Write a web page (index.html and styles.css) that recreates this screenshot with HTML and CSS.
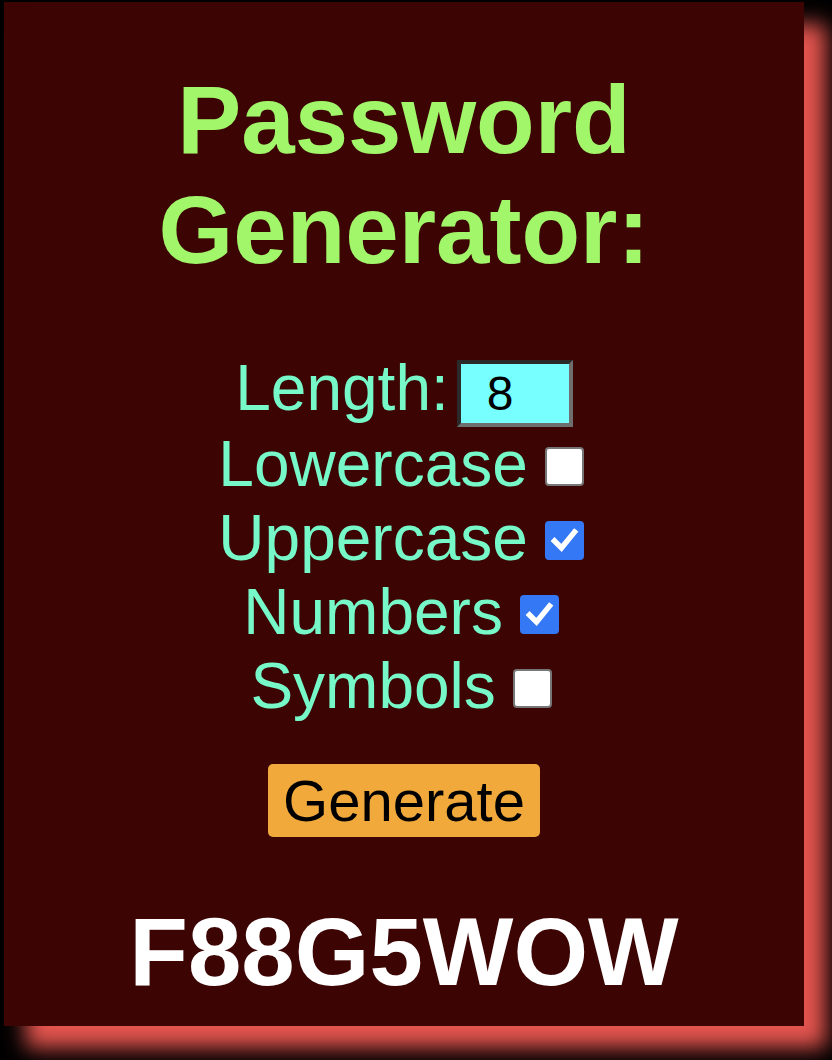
FILE: index.html
```html
<!DOCTYPE html>
<html lang="en">
<head>
<meta charset="utf-8">
<title>Password Generator</title>
<link rel="stylesheet" href="styles.css">
</head>
<body>
<div class="card">
  <h1 class="title">Password Generator:</h1>
  <div class="options">
    <div class="row">Length:<input class="len" type="text" value="8"></div>
    <div class="row">Lowercase <span class="box"></span></div>
    <div class="row">Uppercase <span class="box checked"><svg viewBox="0 0 39 39" width="39" height="39"><path d="M9.5 20 L16.5 27 L29.5 11" fill="none" stroke="#fff" stroke-width="5.5" stroke-linecap="square" stroke-linejoin="miter"/></svg></span></div>
    <div class="row">Numbers <span class="box checked"><svg viewBox="0 0 39 39" width="39" height="39"><path d="M9.5 20 L16.5 27 L29.5 11" fill="none" stroke="#fff" stroke-width="5.5" stroke-linecap="square" stroke-linejoin="miter"/></svg></span></div>
    <div class="row">Symbols <span class="box"></span></div>
  </div>
  <button class="gen" type="button">Generate</button>
  <div class="pw">F88G5WOW</div>
</div>
</body>
</html>
```
FILE: styles.css
```css
html, body {
  margin: 0;
  padding: 0;
  background: #000;
}
body {
  width: 832px;
  height: 1060px;
  overflow: hidden;
  font-family: "Liberation Sans", Arial, sans-serif;
}
.card {
  box-sizing: border-box;
  width: 800px;
  height: 1024px;
  margin: 2px 0 0 4px;
  background: #3c0504;
  box-shadow: 22px 22px 20px #e5554f;
  display: flex;
  flex-direction: column;
  align-items: center;
  text-align: center;
  padding-top: 63px;
}
.title {
  margin: 0;
  font-size: 96px;
  line-height: 110px;
  font-weight: bold;
  color: #a2f66a;
}
.options {
  margin-top: 66px;
  font-size: 64px;
  color: #76f8c8;
  display: flex;
  flex-direction: column;
  align-items: center;
}
.row {
  white-space: nowrap;
}
.len {
  box-sizing: border-box;
  width: 116px;
  height: 67px;
  margin: 0 0 0 8px;
  padding: 0 0 0 26px;
  font-family: "Liberation Sans", Arial, sans-serif;
  font-size: 48px;
  color: #000;
  background: #77ffff;
  border-style: solid;
  border-width: 4px;
  border-color: #2a2a2a #6e6e6e #6e6e6e #2a2a2a;
  outline: none;
  vertical-align: baseline;
}
.box {
  display: inline-block;
  box-sizing: border-box;
  width: 39px;
  height: 39px;
  margin-left: -1px;
  margin-right: 6px;
  background: #fff;
  border: 2px solid #767676;
  border-radius: 4px;
  vertical-align: baseline;
  position: relative;
}
.box.checked {
  background: #3478f6;
  border-color: #3478f6;
}
.box svg {
  position: absolute;
  left: -2px;
  top: -2px;
}
.gen {
  margin-top: 41px;
  padding: 3px 15px;
  font-family: "Liberation Sans", Arial, sans-serif;
  font-size: 58px;
  color: #000;
  background: #f2a93b;
  border: none;
  border-radius: 5px;
}
.pw {
  margin-top: 60px;
  font-size: 96px;
  font-weight: bold;
  color: #fff;
  line-height: 110px;
}
```
